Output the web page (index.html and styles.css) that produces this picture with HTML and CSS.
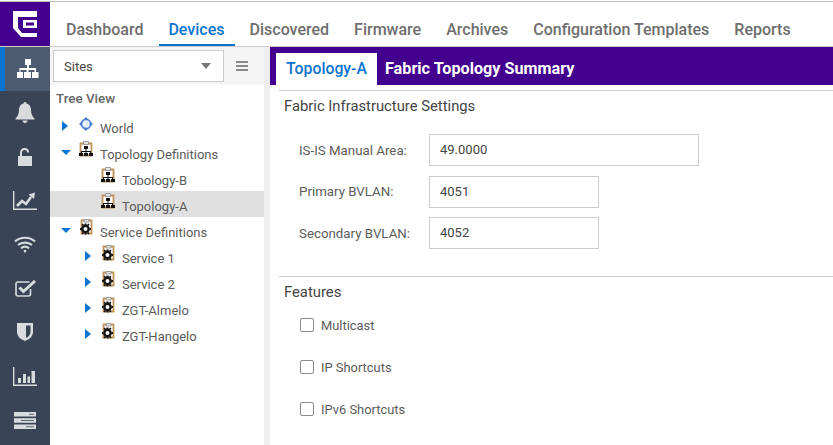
FILE: index.html
```html
<!DOCTYPE html>
<html>
<head>
  <title>Devices - Fabric Topology</title>
  <link rel="stylesheet" href="styles.css">
</head>
<body>
  <svg class="icon-defs" xmlns="http://www.w3.org/2000/svg">
    <symbol id="topo" viewBox="0 0 14 18">
      <path d="M1.5 2.500h11v12h-11z" fill="#fff" stroke="#c0935a" stroke-width="1.800"/>
      <path d="M4.500 .5h5v3h-5z" fill="#e4e4e4" stroke="#8a8a8a" stroke-width=".8"/>
      <path d="M5 5h4v3H5zM6.500 8h1v2h4.500v2h-1v-1H7.500v1h-1v-1H3v1H2v-2h4.500z" fill="#111"/>
      <path d="M0 12h4v3H0zM5 12h4v3H5zM10 12h4v3h-4z" fill="#111"/>
    </symbol>
    <symbol id="serv" viewBox="0 0 14 18">
      <path d="M2.500 1.500h10v13h-10z" fill="#fff" stroke="#c0935a" stroke-width="1.800"/>
      <path d="M5 .5h5v2.500H5z" fill="#e4e4e4" stroke="#8a8a8a" stroke-width=".8"/>
      <circle cx="6.500" cy="10" r="3.200" fill="#fff" stroke="#111" stroke-width="2.400"/>
      <path d="M5.500 4.500h2v1.500h-2zM5.500 14h2v1.500h-2zM1 9h1.500v2H1zM10.500 9H12v2h-1.500zM2.500 5.700l1.200-1.200 1.200 1.200-1.200 1.200zM8.100 5.700l1.200-1.200 1.200 1.200-1.200 1.200zM2.500 14.300l1.200-1.200 1.200 1.200-1.200 1.200zM8.100 14.300l1.200-1.200 1.200 1.200-1.200 1.200z" fill="#111"/>
    </symbol>
  </svg>

  <div class="topbar">
    <div class="logo">
      <svg width="24" height="26" viewBox="0 0 24 26">
        <path d="M0 0h24v6H5v11l4 5h15v4H8l-8-9z" fill="#fff"/>
        <path d="M10 9h14v8H10zM13 11.500v3h8v-3z" fill="#fff" fill-rule="evenodd"/>
      </svg>
    </div>
    <nav class="tabs">
      <a>Dashboard</a>
      <a class="active">Devices</a>
      <a>Discovered</a>
      <a>Firmware</a>
      <a>Archives</a>
      <a>Configuration Templates</a>
      <a>Reports</a>
    </nav>
  </div>

  <div class="body-row">
    <aside class="rail">
      <div class="rail-item selected">
        <svg width="22" height="19" viewBox="0 0 22 19"><path d="M8 0h6v6h-2v3h7v4h2.500v6h-6.500v-6h2.500v-2h-6v2h2.500v6h-7v-6h2.500v-2h-6v2h2.500v6H0v-6h2.500V9H10V6H8z"/></svg>
      </div>
      <div class="rail-item">
        <svg width="20" height="21" viewBox="0 0 20 21"><path d="M10 0c1 0 1.500.8 1.500 1.600C14.500 2.300 16 5 16 8c0 4 1.500 6.500 3.500 8.500v1H.5v-1C2.500 14.500 4 12 4 8c0-3 1.500-5.700 4.500-6.400C8.500.8 9 0 10 0zM7.500 18.500h5C12.500 20 11.500 21 10 21s-2.500-1-2.500-2.500z"/></svg>
      </div>
      <div class="rail-item">
        <svg width="14" height="18" viewBox="0 0 14 18"><path d="M0 8h14v10H0z"/><path d="M3 8V4.500a3.600 3.600 0 0 1 7.200 0" fill="none" stroke="#d9dcdf" stroke-width="2"/></svg>
      </div>
      <div class="rail-item">
        <svg width="24" height="19" viewBox="0 0 24 19"><path d="M.7 0v18.300H24" fill="none" stroke="#d9dcdf" stroke-width="1.400"/><path d="M4 15l5-5 4 3 5-7" fill="none" stroke="#d9dcdf" stroke-width="2.600"/><path d="M15.500 3.500L22 1.500l-1 6.500z"/></svg>
      </div>
      <div class="rail-item">
        <svg width="22" height="17" viewBox="0 0 22 17" fill="none" stroke="#d9dcdf" stroke-width="2.200"><path d="M1 5.500c5.500-5 14.500-5 20 0M4 9c3.800-3.300 10.200-3.300 14 0M7 12.300c2.300-1.800 5.700-1.800 8 0"/><circle cx="11" cy="15" r="1.200" fill="#d9dcdf" stroke="none"/><path d="M9.500 14.800h3L11 17z" fill="#d9dcdf" stroke="none"/></svg>
      </div>
      <div class="rail-item">
        <svg width="21" height="17" viewBox="0 0 21 17"><path d="M14.500 2H3a2 2 0 0 0-2 2v10a2 2 0 0 0 2 2h10.500a2 2 0 0 0 2-2V9" fill="none" stroke="#d9dcdf" stroke-width="1.600"/><path d="M4.500 7.500l4 4L20 1" fill="none" stroke="#d9dcdf" stroke-width="3"/></svg>
      </div>
      <div class="rail-item">
        <svg width="16" height="18" viewBox="0 0 16 18"><path d="M0 0h16v9c0 4.500-4 7.500-8 9-4-1.500-8-4.500-8-9zM9 2.500v12.500c2.500-1.200 4.500-3.200 4.500-6V2.500z" fill-rule="evenodd"/></svg>
      </div>
      <div class="rail-item">
        <svg width="24" height="19" viewBox="0 0 24 19"><path d="M.7 0v18.300H24" fill="none" stroke="#d9dcdf" stroke-width="1.400"/><path d="M5 11h3v5H5zM10 7h3v9h-3zM14.500 9.500h2.500V16h-2.500zM18.500 4H22v12h-3.500z"/></svg>
      </div>
      <div class="rail-item">
        <svg width="22" height="17" viewBox="0 0 22 17"><path d="M0 0h22v4.500H0zM0 6.200h22v4.500H0zM0 12.500h22V17H0z"/><path d="M15 1.800h5v1h-5zM7 8h13v1H7zM12 14.200h8v1h-8z" fill="#5b6778"/></svg>
      </div>
    </aside>

    <section class="tree-panel">
      <div class="site-bar">
        <div class="site-select">
          <span>Sites</span>
          <i class="caret"></i>
        </div>
        <div class="menu-lines"><i></i><i></i><i></i></div>
      </div>
      <div class="tree-title">Tree View</div>
      <ul class="tree">
        <li class="lvl1"><i class="arrow right"></i>
          <svg class="node" width="14" height="14" viewBox="0 0 14 14"><circle cx="7" cy="7" r="4.600" fill="#e6eefa" stroke="#5f8ad6" stroke-width="1.800"/><path d="M7 0l2.400 2.800H4.600zM7 14l2.400-2.800H4.600zM0 7l2.800-2.400v4.800zM14 7l-2.800-2.400v4.800z" fill="#3f78d0"/></svg>
          <span>World</span></li>
        <li class="lvl1"><i class="arrow down"></i><svg class="node" width="14" height="18"><use href="#topo"/></svg><span>Topology Definitions</span></li>
        <li class="lvl2 no-arrow"><svg class="node" width="14" height="18"><use href="#topo"/></svg><span>Tobology-B</span></li>
        <li class="lvl2 no-arrow current"><svg class="node" width="14" height="18"><use href="#topo"/></svg><span>Topology-A</span></li>
        <li class="lvl1"><i class="arrow down"></i><svg class="node" width="14" height="18"><use href="#serv"/></svg><span>Service Definitions</span></li>
        <li class="lvl2"><i class="arrow right"></i><svg class="node" width="14" height="18"><use href="#serv"/></svg><span>Service 1</span></li>
        <li class="lvl2"><i class="arrow right"></i><svg class="node" width="14" height="18"><use href="#serv"/></svg><span>Service 2</span></li>
        <li class="lvl2"><i class="arrow right"></i><svg class="node" width="14" height="18"><use href="#serv"/></svg><span>ZGT-Almelo</span></li>
        <li class="lvl2"><i class="arrow right"></i><svg class="node" width="14" height="18"><use href="#serv"/></svg><span>ZGT-Hangelo</span></li>
      </ul>
    </section>

    <main class="main">
      <div class="title-bar">
        <div class="title-tab">Topology-A</div>
        <div class="title-text">Fabric Topology Summary</div>
      </div>
      <div class="content">
        <fieldset class="group">
          <h2>Fabric Infrastructure Settings</h2>
          <div class="form-row"><label>IS-IS Manual Area:</label><div class="input wide">49.0000</div></div>
          <div class="form-row"><label>Primary BVLAN:</label><div class="input">4051</div></div>
          <div class="form-row"><label>Secondary BVLAN:</label><div class="input">4052</div></div>
        </fieldset>
        <fieldset class="group features">
          <h2>Features</h2>
          <div class="check-row"><i class="box"></i><span>Multicast</span></div>
          <div class="check-row"><i class="box"></i><span>IP Shortcuts</span></div>
          <div class="check-row"><i class="box"></i><span>IPv6 Shortcuts</span></div>
        </fieldset>
      </div>
    </main>
  </div>
</body>
</html>
```

FILE: styles.css
```css
:root {
  --purple: #43008f;
  --blue: #0a74d1;
  --rail: #394557;
  --rail-selected: #4d5c71;
  --rail-icon: #d9dcdf;
  --line: #cccccc;
  --text: #555555;
}

html, body {
  height: 100%;
}

body {
  margin: 0;
  overflow: hidden;
  font-family: Roboto, "Liberation Sans", Arial, sans-serif;
  font-size: 13px;
  color: var(--text);
  background: #fff;
}

.icon-defs {
  position: absolute;
  width: 0;
  height: 0;
}

.topbar {
  display: flex;
  height: 44px;
  margin-top: 1px;
  border-top: 1px solid #bdbdbd;
  border-bottom: 1px solid var(--line);
}

.logo {
  width: 50px;
  background: var(--purple);
  display: flex;
  align-items: center;
  justify-content: center;
}

.tabs {
  display: flex;
  padding-left: 16px;
}

.tabs a {
  padding-top: 18px;
  margin-right: 25px;
  font-size: 16px;
  font-weight: 500;
  color: #6e6e6e;
}

.tabs a.active {
  color: var(--blue);
  border-bottom: 2px solid var(--blue);
  height: 24px;
  padding-left: 9px;
  padding-right: 10px;
  margin-left: -9px;
  margin-right: 15px;
}

.body-row {
  display: flex;
  height: 399px;
}

.rail {
  width: 50px;
  background: var(--rail);
  flex: none;
}

.rail-item {
  height: 43.9px;
  display: flex;
  align-items: center;
  justify-content: center;
  fill: var(--rail-icon);
}

.rail-item.selected {
  background: var(--rail-selected);
  border-left: 5px solid var(--blue);
  box-sizing: border-box;
  fill: #fff;
}

.tree-panel {
  width: 214px;
  flex: none;
  border-right: 6px solid #eeeeee;
}

.site-bar {
  display: flex;
  align-items: center;
  height: 38px;
  padding-left: 3px;
  background: #f5f5f5;
}

.site-select {
  width: 147px;
  height: 30px;
  border: 1px solid var(--line);
  background: #fff;
  display: flex;
  align-items: center;
  justify-content: space-between;
  padding: 0 12px 0 10px;
  color: #444;
}

.caret {
  border-left: 5px solid transparent;
  border-right: 5px solid transparent;
  border-top: 6px solid #777;
}

.menu-lines {
  margin-left: 12px;
  display: flex;
  flex-direction: column;
  gap: 2px;
}

.menu-lines i {
  display: block;
  width: 12px;
  height: 2px;
  background: #8a8a8a;
}

.tree-title {
  height: 28px;
  line-height: 27px;
  padding-left: 6px;
  font-weight: 500;
  font-size: 13.4px;
  color: #666;
}

.tree {
  list-style: none;
  margin: 0;
  padding: 0;
}

.tree li {
  display: flex;
  align-items: center;
  height: 26px;
  color: #5c5c5c;
}

.tree li span {
  padding-top: 4px;
}

.tree .lvl1 {
  padding-left: 11px;
}

.tree .lvl2 {
  padding-left: 35px;
}

.tree .no-arrow {
  padding-left: 51px;
}

.tree .current {
  background: #e0e0e0;
}

.arrow {
  display: block;
  flex: none;
  width: 0;
}

.arrow.right {
  border-top: 5px solid transparent;
  border-bottom: 5px solid transparent;
  border-left: 6px solid var(--blue);
  margin: 0 11px 0 1px;
}

.lvl2 .arrow.right {
  margin: 0 10px 0 0;
}

.arrow.down {
  border-left: 5px solid transparent;
  border-right: 5px solid transparent;
  border-top: 5px solid var(--blue);
  margin-right: 8px;
}

.node {
  flex: none;
  margin: -4px 7px 0 0;
}

.main {
  flex: 1;
  min-width: 0;
}

.title-bar {
  display: flex;
  align-items: flex-end;
  height: 38px;
  background: var(--purple);
  padding-left: 6px;
}

.title-tab {
  width: 101px;
  height: 32px;
  line-height: 32px;
  background: #fff;
  text-align: center;
  color: var(--blue);
  font-size: 15.8px;
  font-weight: 500;
}

.title-text {
  height: 32px;
  line-height: 32px;
  margin-left: 8px;
  color: #fff;
  font-size: 16.2px;
  font-weight: 700;
}

.content {
  padding: 5px 0 0 9px;
}

.group {
  margin: 0;
  padding: 0;
  border: 0;
  border-top: 1px solid var(--line);
}

.group h2 {
  margin: 0;
  padding: 6px 0 0 5px;
  font-size: 14.8px;
  font-weight: 400;
  line-height: 18px;
  color: #444;
}

.form-row {
  display: flex;
  align-items: center;
  height: 32px;
  margin-bottom: 9.5px;
}

.group h2 + .form-row {
  margin-top: 19px;
}

.form-row label {
  width: 130px;
  padding-left: 20px;
  box-sizing: border-box;
  margin-right: 20px;
  font-size: 13.3px;
  color: #5c5c5c;
  white-space: nowrap;
}

.input {
  width: 170px;
  height: 32px;
  line-height: 30px;
  border: 1px solid var(--line);
  padding-left: 10px;
  box-sizing: border-box;
  color: #444;
}

.input.wide {
  width: 270px;
}

.features {
  margin-top: 17.5px;
}

.check-row {
  display: flex;
  align-items: center;
  height: 42px;
  padding-left: 21px;
  font-size: 12.9px;
  color: #5c5c5c;
}

.features h2 + .check-row {
  margin-top: 3px;
}

.box {
  display: block;
  width: 12px;
  height: 12px;
  margin-right: 7px;
  border: 1px solid #8a8a8a;
  border-radius: 2px;
  background: #fff;
}
```
